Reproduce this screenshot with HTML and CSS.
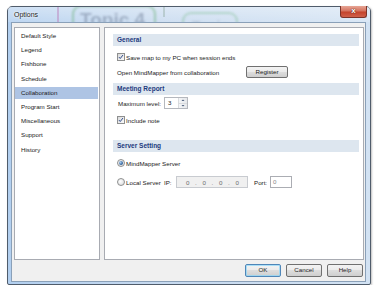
FILE: index.html
```html
<!DOCTYPE html>
<html lang="en">
  <head>
    <meta charset="UTF-8" />
    <title>Options</title>
    <link rel="stylesheet" href="styles.css">
  </head>
  <body>
    <div class="window">
      <div class="titlebar">
        <div class="glass">
          <span class="bg-line"></span>
          <span class="bg-node bg-node-main"><span class="bg-text">Topic 4</span></span>
          <span class="bg-link"></span>
          <span class="bg-node bg-node-side"><span class="bg-text bg-text-side">Topic</span></span>
        </div>
        <span class="title">Options</span>
        <span class="close">x</span>
      </div>

      <div class="client">
        <div class="main">
          <ul class="nav">
            <li>Default Style</li>
            <li>Legend</li>
            <li>Fishbone</li>
            <li>Schedule</li>
            <li class="active">Collaboration</li>
            <li>Program Start</li>
            <li>Miscellaneous</li>
            <li>Support</li>
            <li>History</li>
          </ul>

          <div class="panel">
            <div class="section-head">General</div>
            <div class="row row-save">
              <span class="check"><svg viewBox="0 0 8 8"><path d="M1.2 4.1 L3 6 L6.6 1.4" /></svg></span>
              <span>Save map to my PC when session ends</span>
            </div>
            <div class="row row-open">
              <span class="open-label">Open MindMapper from collaboration</span>
              <button class="btn btn-register">Register</button>
            </div>

            <div class="section-head head-meeting">Meeting Report</div>
            <div class="row row-level">
              <span class="level-label">Maximum level:</span>
              <span class="spin">
                <span class="spin-value">3</span>
                <span class="spin-buttons">
                  <span class="spin-btn"><svg viewBox="0 0 6 4"><path d="M1.5 3 L3 1.4 L4.5 3 Z" /></svg></span>
                  <span class="spin-btn"><svg viewBox="0 0 6 4"><path d="M1.5 1 L3 2.6 L4.5 1 Z" /></svg></span>
                </span>
              </span>
            </div>
            <div class="row row-note">
              <span class="check"><svg viewBox="0 0 8 8"><path d="M1.2 4.1 L3 6 L6.6 1.4" /></svg></span>
              <span>Include note</span>
            </div>

            <div class="section-head head-server">Server Setting</div>
            <div class="row row-mm">
              <span class="radio checked"></span>
              <span>MindMapper Server</span>
            </div>
            <div class="row row-local">
              <span class="radio"></span>
              <span class="local-label">Local Server</span>
              <span class="ip-label">IP:</span>
              <span class="ip-box">
                <span>0</span><span>.</span><span>0</span><span>.</span><span>0</span><span>.</span><span>0</span>
              </span>
              <span class="port-label">Port:</span>
              <span class="port-box">0</span>
            </div>
          </div>
        </div>

        <div class="footer">
          <button class="btn btn-default">OK</button>
          <button class="btn">Cancel</button>
          <button class="btn">Help</button>
        </div>
      </div>
    </div>
  </body>
</html>
```

FILE: styles.css
```css
* {
  box-sizing: border-box;
}
body {
  margin: 0;
  background: #fff;
  font-family: "Liberation Sans", Arial, sans-serif;
  font-size: 6.2px;
  color: #1a1a1a;
}

/* window frame */
.window {
  position: relative;
  display: flex;
  flex-direction: column;
  margin: 6px 0 0 7px;
  width: 364px;
  height: 279px;
  padding: 0 4px 2px 3px;
  border: 1px solid #505c6b;
  border-radius: 5px 5px 2px 2px;
  background: linear-gradient(90deg, #b2cfef, #c6d9ef 40%, #d2e2f3);
  box-shadow: 1px 1px 2px rgba(0, 0, 0, 0.25);
}
.titlebar {
  position: relative;
  display: flex;
  align-items: center;
  height: 15px;
  padding-left: 3px;
}
.glass {
  position: absolute;
  top: 0;
  left: -3px;
  right: -4px;
  bottom: 0;
  overflow: hidden;
  background: linear-gradient(180deg, rgba(255, 255, 255, 0.4), rgba(255, 255, 255, 0.15));
}
.bg-line {
  position: absolute;
  left: 49px;
  top: 0;
  width: 2px;
  height: 15px;
  background: rgba(190, 140, 195, 0.55);
  filter: blur(0.6px);
}
.bg-node {
  position: absolute;
  border: 2px solid rgba(110, 180, 125, 0.5);
  border-radius: 9px;
  filter: blur(0.9px);
}
.bg-node-main {
  left: 64px;
  top: -2px;
  width: 84px;
  height: 32px;
}
.bg-node-side {
  left: 174px;
  top: 5px;
  width: 56px;
  height: 24px;
  border-color: rgba(110, 180, 125, 0.35);
}
.bg-text {
  position: absolute;
  left: 6px;
  top: 3px;
  font-size: 19px;
  font-weight: bold;
  line-height: 19px;
  color: rgba(95, 110, 135, 0.42);
  white-space: nowrap;
}
.bg-text-side {
  left: 8px;
  top: 3px;
  font-size: 14px;
  color: rgba(95, 110, 135, 0.2);
}
.bg-link {
  position: absolute;
  left: 155px;
  top: 0;
  width: 2px;
  height: 10px;
  background: rgba(120, 150, 130, 0.3);
  filter: blur(0.6px);
}
.title {
  position: relative;
  font-size: 7px;
  color: #1b1b1b;
  text-shadow: 0 0 3px #fff, 0 0 2px #fff;
}
.close {
  position: absolute;
  top: -1px;
  right: -1px;
  width: 27px;
  height: 12px;
  border: 1px solid #7c3328;
  border-top: none;
  border-radius: 0 0 3px 3px;
  background: linear-gradient(#e6a595, #d5735f 45%, #c4442c 55%, #d0604a);
  color: #fff;
  font-size: 8px;
  font-weight: bold;
  line-height: 10px;
  text-align: center;
  text-shadow: 0 0 1px #5a1a10, 0 0 1px #5a1a10;
}

/* client area */
.client {
  flex: 1;
  display: flex;
  flex-direction: column;
  padding: 4px 1px 0 2px;
  border: 1px solid #8aa0b8;
  background: #f0f0f0;
}
.main {
  display: flex;
  gap: 4px;
  height: 233px;
}
.nav {
  width: 86px;
  margin: 0;
  padding: 2px 0 0;
  list-style: none;
  border: 1px solid #a8abb2;
  background: #fff;
}
.nav li {
  height: 12px;
  margin: 0 1px 2.2px 0;
  padding-left: 6px;
  line-height: 12px;
}
.nav li.active {
  background: #aec4e4;
}
.panel {
  flex: 1;
  padding: 6px 4px 0 8px;
  border: 1px solid #a8abb2;
  background: #fff;
}
.section-head {
  height: 12px;
  padding-left: 4px;
  background: #dde6ef;
  color: #1c3a7e;
  font-size: 6.5px;
  font-weight: bold;
  line-height: 12px;
}
.head-meeting {
  margin-top: 4px;
}
.head-server {
  margin-top: 13px;
}
.row {
  display: flex;
  align-items: center;
  height: 14px;
  padding-left: 4px;
  white-space: nowrap;
}
.row-save {
  margin-top: 4px;
}
.row-open {
  margin-top: 1px;
}
.row-level {
  margin-top: 1px;
  padding-left: 5px;
}
.row-note {
  margin-top: 3px;
}
.row-mm {
  margin-top: 4px;
}
.row-local {
  margin-top: 5px;
}

/* controls */
.check {
  display: flex;
  width: 8px;
  height: 8px;
  margin-right: 1px;
  border: 1px solid #8e8f8f;
  background: linear-gradient(135deg, #d9dadb, #fbfbfb);
}
.check svg {
  width: 6px;
  height: 6px;
  fill: none;
  stroke: #2c4889;
  stroke-width: 1.3;
}
.radio {
  position: relative;
  width: 8px;
  height: 8px;
  margin-right: 1px;
  border: 1px solid #8e8f8f;
  border-radius: 50%;
  background: radial-gradient(circle at 40% 40%, #fff, #d5d6d8);
}
.radio.checked::after {
  content: "";
  position: absolute;
  left: 1px;
  top: 1px;
  width: 4px;
  height: 4px;
  border-radius: 50%;
  background: radial-gradient(circle at 35% 35%, #a9cdf0, #2a5a92 70%);
}
.open-label {
  width: 129px;
}
.btn {
  padding: 0;
  border: 1px solid #707070;
  border-radius: 2px;
  background: linear-gradient(#f3f3f3, #ebebeb 45%, #dddddd 50%, #cfcfcf);
  color: #1e1e1e;
  font: inherit;
  line-height: 1;
}
.btn-register {
  width: 42px;
  height: 12px;
}
.btn-default {
  border-color: #4f86b8;
  box-shadow: inset 0 0 0 1px rgba(140, 215, 250, 0.7);
}
.level-label {
  width: 46px;
}
.spin {
  display: flex;
  width: 24px;
  height: 12px;
  border: 1px solid #b5b8be;
  background: #fff;
}
.spin-value {
  flex: 1;
  padding-left: 3px;
  line-height: 10px;
}
.spin-buttons {
  display: flex;
  flex-direction: column;
  width: 9px;
  border-left: 1px solid #d9dbde;
  background: linear-gradient(90deg, #f4f5f7, #e6e8eb);
}
.spin-btn {
  flex: 1;
  display: flex;
  justify-content: center;
  align-items: center;
}
.spin-btn + .spin-btn {
  border-top: 1px solid #d9dbde;
}
.spin-btn svg {
  width: 6px;
  height: 4px;
  fill: #4b5e7b;
}
.local-label {
  width: 38px;
}
.ip-label {
  width: 12px;
}
.ip-box {
  display: flex;
  justify-content: space-between;
  align-items: center;
  width: 72px;
  height: 12px;
  padding: 0 8px 0 9px;
  border: 1px solid #c8cbd0;
  background: #f0f0f0;
  color: #6d6d6d;
}
.port-label {
  width: 16px;
  margin-left: 6px;
}
.port-box {
  width: 22px;
  height: 12px;
  padding-left: 2px;
  border: 1px solid #abadb3;
  background: #fff;
  color: #8a8a8a;
  line-height: 10px;
}

/* dialog buttons */
.footer {
  display: flex;
  justify-content: flex-end;
  gap: 5px;
  margin-top: 4px;
  padding-right: 1px;
}
.footer .btn {
  width: 36px;
  height: 13px;
}
```
